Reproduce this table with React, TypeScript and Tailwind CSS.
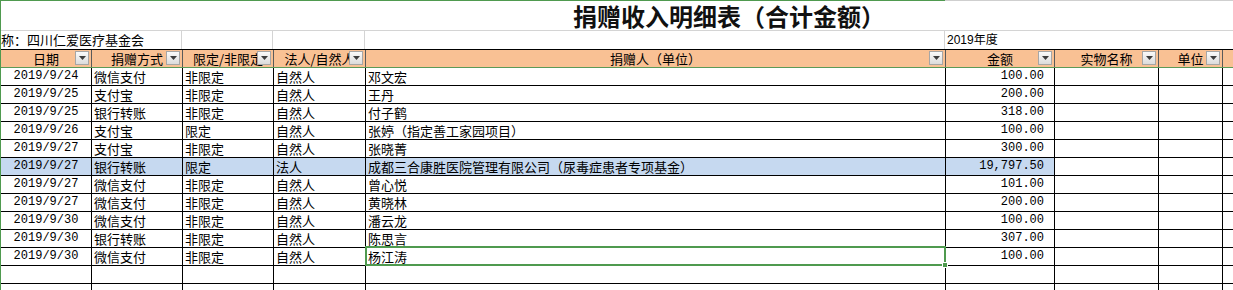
import React from 'react';

const cols = ['w-[91px]', 'w-[91px]', 'w-[91px]', 'w-[92px]', 'w-[580px]', 'w-[109px]', 'w-[104px]', 'w-[64px]', 'flex-1'];

const cjk = "font-['Noto_Sans_CJK_SC',sans-serif]";
const mono = "font-['Liberation_Mono','Noto_Sans_CJK_SC',monospace]";

type Row = { date: string; way: string; limit: string; kind: string; donor: string; amount: string; hl?: boolean; sel?: boolean };

const rows: Row[] = [
  { date: '2019/9/24', way: '微信支付', limit: '非限定', kind: '自然人', donor: '邓文宏', amount: '100.00' },
  { date: '2019/9/25', way: '支付宝', limit: '非限定', kind: '自然人', donor: '王丹', amount: '200.00' },
  { date: '2019/9/25', way: '银行转账', limit: '非限定', kind: '自然人', donor: '付子鹤', amount: '318.00' },
  { date: '2019/9/26', way: '支付宝', limit: '限定', kind: '自然人', donor: '张婷（指定善工家园项目）', amount: '100.00' },
  { date: '2019/9/27', way: '支付宝', limit: '非限定', kind: '自然人', donor: '张晓菁', amount: '300.00' },
  { date: '2019/9/27', way: '银行转账', limit: '限定', kind: '法人', donor: '成都三合康胜医院管理有限公司（尿毒症患者专项基金）', amount: '19,797.50', hl: true },
  { date: '2019/9/27', way: '微信支付', limit: '非限定', kind: '自然人', donor: '曾心悦', amount: '101.00' },
  { date: '2019/9/27', way: '微信支付', limit: '非限定', kind: '自然人', donor: '黄晓林', amount: '200.00' },
  { date: '2019/9/30', way: '微信支付', limit: '非限定', kind: '自然人', donor: '潘云龙', amount: '100.00' },
  { date: '2019/9/30', way: '银行转账', limit: '非限定', kind: '自然人', donor: '陈思言', amount: '307.00' },
  { date: '2019/9/30', way: '微信支付', limit: '非限定', kind: '自然人', donor: '杨江涛', amount: '100.00', sel: true },
];

const headers = ['日期', '捐赠方式', '限定/非限定', '法人/自然人', '捐赠人（单位）', '金额', '实物名称', '单位', ''];

const FilterButton = () => (
  <span className="absolute right-[2px] top-[1px] flex h-[14px] w-[14px] items-center justify-center border border-[#a6a6a6] bg-gradient-to-b from-[#fafafa] to-[#dcdcdc]">
    <svg width="7" height="4" viewBox="0 0 7 4">
      <polygon points="0,0 7,0 3.5,4" fill="#3c3c3c" />
    </svg>
  </span>
);

export default function App() {
  return (
    <div className={`w-[1233px] h-[290px] overflow-hidden bg-white border-l border-[#4f9a4f] text-[13px] text-black ${cjk}`}>
      {/* title row */}
      <div className="flex h-[31px] border-b border-[#d4d4d4]">
        <div className="flex h-full w-[944px] shrink-0 items-center border-t border-[#4f9a4f] pl-[572px]">
          <span className="text-[24px] font-bold leading-[28px] whitespace-nowrap text-[#111]">捐赠收入明细表（合计金额）</span>
        </div>
        <div className="flex-1 border-t border-[#cfcfcf]" />
      </div>

      {/* org row */}
      <div className="flex h-[19px] border-b border-black leading-[18px]">
        <div className="w-[181px] shrink-0 whitespace-nowrap border-r border-[#d4d4d4] overflow-hidden">称：四川仁爱医疗基金会</div>
        <div className="w-[91px] shrink-0 border-r border-[#d4d4d4]" />
        <div className="w-[92px] shrink-0 border-r border-[#d4d4d4]" />
        <div className="w-[580px] shrink-0 border-r border-[#d4d4d4]" />
        <div className="flex-1 pl-[2px] text-[12px] font-['Liberation_Sans','Noto_Sans_CJK_SC',sans-serif]">2019年度</div>
      </div>

      {/* header row */}
      <div className="flex h-[18px] border-b border-[#5b9a58] bg-[#f9c194] leading-[17px]">
        {headers.map((h, i) => (
          <div
            key={i}
            className={`${cols[i]} relative shrink-0 overflow-hidden whitespace-nowrap text-center ${i < 8 ? 'border-r border-[#5a5a5a]' : ''}`}
          >
            {h}
            {i < 8 && <FilterButton />}
          </div>
        ))}
      </div>

      {/* data rows */}
      {rows.map((r, idx) => {
        const bg = r.hl ? 'bg-[#c6d9f0]' : '';
        return (
          <div key={idx} className="flex h-[18px] border-b border-black leading-[17px]">
            <div className={`${cols[0]} ${bg} shrink-0 border-r border-black text-center text-[12px] ${mono}`}>{r.date}</div>
            <div className={`${cols[1]} ${bg} shrink-0 border-r border-black pl-[2px] whitespace-nowrap`}>{r.way}</div>
            <div className={`${cols[2]} ${bg} shrink-0 border-r border-black pl-[2px] whitespace-nowrap`}>{r.limit}</div>
            <div className={`${cols[3]} ${bg} shrink-0 border-r border-black pl-[2px] whitespace-nowrap`}>{r.kind}</div>
            <div className={`${cols[4]} ${bg} relative shrink-0 border-r border-black pl-[2px] whitespace-nowrap`}>
              {r.donor}
              {r.sel && (
                <span className="absolute -left-[1px] -top-[2px] -right-[1px] -bottom-[1px] border-2 border-[#4f9a4f]">
                  <span className="absolute -right-[4px] -bottom-[4px] h-[6px] w-[6px] border border-white bg-[#4f9a4f]" />
                </span>
              )}
            </div>
            <div className={`${cols[5]} ${bg} shrink-0 border-r border-black pr-[10px] text-right text-[12px] ${mono}`}>{r.amount}</div>
            <div className={`${cols[6]} shrink-0 border-r border-black`} />
            <div className={`${cols[7]} shrink-0 border-r border-black`} />
            <div className="flex-1" />
          </div>
        );
      })}

      {/* empty rows */}
      {[0, 1].map((k) => (
        <div key={k} className="flex h-[18px] border-b border-black">
          {cols.slice(0, 8).map((c, i) => (
            <div key={i} className={`${c} shrink-0 border-r border-black`} />
          ))}
          <div className="flex-1" />
        </div>
      ))}
    </div>
  );
}
